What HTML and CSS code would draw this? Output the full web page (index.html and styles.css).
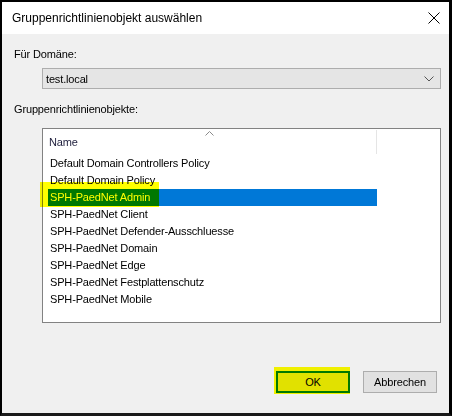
FILE: index.html
```html
<!DOCTYPE html>
<html lang="de">
<head>
<meta charset="utf-8">
<title>Gruppenrichtlinienobjekt auswählen</title>
<link rel="stylesheet" href="styles.css">
</head>
<body>
<div class="window">
  <div class="titlebar">
    <span class="title">Gruppenrichtlinienobjekt auswählen</span>
    <svg class="close" width="12" height="12" viewBox="0 0 12 12"><path d="M0.5 0.5 L11.5 11.5 M11.5 0.5 L0.5 11.5" stroke="#000" stroke-width="1" fill="none"/></svg>
  </div>
  <div class="content">
    <div class="label">Für Domäne:</div>
    <div class="combo">
      <span>test.local</span>
      <svg class="chev" width="10" height="6" viewBox="0 0 10 6"><path d="M0.5 0.5 L5 5 L9.5 0.5" stroke="#555" stroke-width="1" fill="none"/></svg>
    </div>
    <div class="label label2">Gruppenrichtlinienobjekte:</div>
    <div class="listbox">
      <div class="header">
        <div class="hcol">
          <span>Name</span>
          <svg class="sort" width="9" height="5" viewBox="0 0 9 5"><path d="M0.5 4.5 L4.5 0.5 L8.5 4.5" stroke="#8a8a8a" stroke-width="1" fill="none"/></svg>
        </div>
      </div>
      <div class="rows">
        <div class="row">Default Domain Controllers Policy</div>
        <div class="row">Default Domain Policy</div>
        <div class="row sel"><span>SPH-PaedNet Admin</span><i class="mark mark1"></i></div>
        <div class="row">SPH-PaedNet Client</div>
        <div class="row">SPH-PaedNet Defender-Ausschluesse</div>
        <div class="row">SPH-PaedNet Domain</div>
        <div class="row">SPH-PaedNet Edge</div>
        <div class="row">SPH-PaedNet Festplattenschutz</div>
        <div class="row">SPH-PaedNet Mobile</div>
      </div>
    </div>
    <div class="buttons">
      <div class="okwrap">
        <button class="btn ok">OK</button>
        <i class="mark mark2"></i>
      </div>
      <button class="btn">Abbrechen</button>
    </div>
  </div>
</div>
</body>
</html>
```

FILE: styles.css
```css
* { box-sizing: border-box; }
html, body { margin: 0; padding: 0; }
body {
  width: 452px;
  height: 416px;
  font-family: "Liberation Sans", Arial, sans-serif;
  color: #000;
  background: #000;
}
.window {
  width: 452px;
  height: 416px;
  border-top: 2px solid #000;
  border-left: 2px solid #000;
  border-right: 3px solid #000;
  border-bottom: 3px solid #1a1a1a;
  background: #f0f0f0;
  display: flex;
  flex-direction: column;
  position: relative;
}
.titlebar {
  height: 32px;
  background: #fff;
  display: flex;
  align-items: center;
  justify-content: space-between;
  padding: 0 9px 0 10px;
  flex: none;
}
.title {
  font-size: 12px;
}
.close { display: block; }
.content {
  flex: 1;
  padding: 12px 8px 0 12px;
  display: flex;
  flex-direction: column;
  font-size: 11px;
  letter-spacing: -0.15px;
}
.label {
  height: 16px;
  line-height: 16px;
}
.combo {
  margin: 6px 0 0 28px;
  height: 21px;
  background: #e5e5e5;
  border: 1px solid #adadad;
  display: flex;
  align-items: center;
  justify-content: space-between;
  padding: 0 6px 0 3px;
}
.chev { display: block; }
.label2 { margin-top: 12px; }
.listbox {
  margin: 11px 0 0 28px;
  height: 195px;
  background: #fff;
  border: 1px solid #828282;
  position: relative;
}
.header {
  height: 25px;
  display: flex;
}
.hcol {
  width: 334px;
  border-right: 1px solid #e5e5e5;
  height: 24px;
  margin-top: 1px;
  padding-left: 6px;
  display: flex;
  align-items: center;
  position: relative;
  color: #1e1e3c;
}
.sort {
  position: absolute;
  left: 162px;
  top: 1px;
}
.rows { padding: 1px 0 0 5px; }
.row {
  height: 17px;
  line-height: 17px;
  padding-left: 2px;
  width: 329px;
  color: #000;
  position: relative;
}
.row.sel {
  background: #0078d7;
  color: #fff;
}
.mark {
  position: absolute;
  background: #ffff00;
  mix-blend-mode: multiply;
  display: block;
}
.mark1 {
  left: -8px;
  top: -7px;
  width: 119px;
  height: 25px;
}
.buttons {
  margin-top: auto;
  margin-bottom: 20px;
  display: flex;
  justify-content: flex-end;
  gap: 13px;
  padding-right: 4px;
}
.okwrap {
  position: relative;
  display: flex;
}
.btn {
  font-family: inherit;
  font-size: 11px;
  letter-spacing: -0.15px;
  width: 74px;
  height: 22px;
  background: #e1e1e1;
  border: 1px solid #adadad;
  padding: 0;
  color: #000;
  display: block;
}
.btn.ok {
  border: 2px solid #0078d7;
}
.mark2 {
  left: -2px;
  top: -4px;
  width: 76px;
  height: 27px;
}
```
